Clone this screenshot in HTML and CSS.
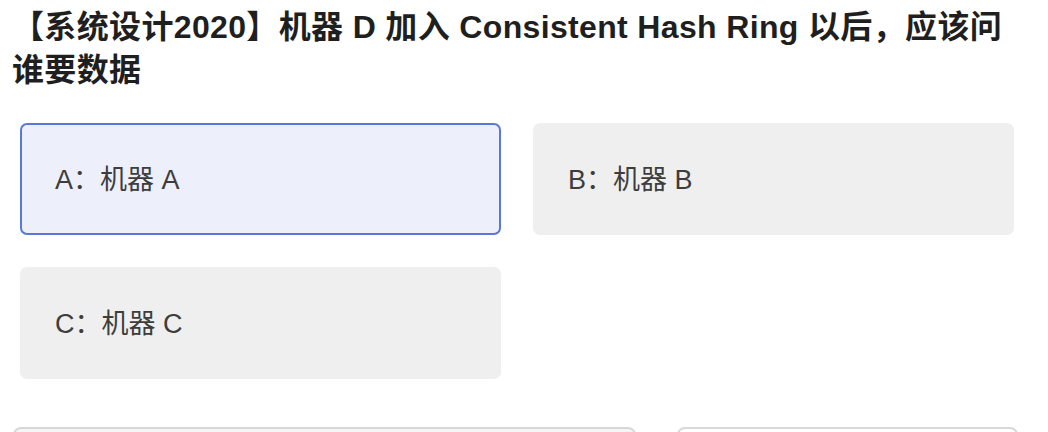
FILE: index.html
```html
<!DOCTYPE html>
<html lang="zh-CN">
<head>
<meta charset="utf-8">
<title>Quiz</title>
<link rel="stylesheet" href="styles.css">
</head>
<body>
<div class="page">
  <h1 class="title">【系统设计2020】机器 D 加入 Consistent Hash Ring 以后，应该问谁要数据</h1>
  <div class="options">
    <div class="option selected">A：机器 A</div>
    <div class="option">B：机器 B</div>
    <div class="option">C：机器 C</div>
  </div>
  <div class="actions">
    <div class="btn btn-left"></div>
    <div class="btn btn-right"></div>
  </div>
</div>
</body>
</html>
```
FILE: styles.css
```css
html, body {
  margin: 0;
  padding: 0;
  background: #ffffff;
}
body {
  font-family: "Liberation Sans", "Noto Sans CJK SC", sans-serif;
  color: #333333;
  overflow: hidden;
}
.page {
  width: 1048px;
  height: 432px;
  overflow: hidden;
}
.title {
  margin: 0;
  padding: 6px 30px 0 12px;
  font-size: 32px;
  line-height: 43px;
  font-weight: 700;
  letter-spacing: 0.35px;
  color: #1f1f1f;
}
.options {
  display: grid;
  grid-template-columns: 481px 481px;
  column-gap: 32px;
  row-gap: 32px;
  padding: 0 0 0 20px;
  margin-top: 31px;
}
.option {
  box-sizing: border-box;
  height: 112px;
  display: flex;
  align-items: center;
  padding: 0 33px 3px 33px;
  background: #efefef;
  border-radius: 7px;
  font-size: 27px;
  color: #3d3d3d;
  border: 2px solid transparent;
}
.option.selected {
  background: #edf0fb;
  border-color: #5a78d6;
}
.actions {
  display: flex;
  gap: 41px;
  padding-left: 13px;
  margin-top: 48px;
}
.btn {
  box-sizing: border-box;
  height: 60px;
  border: 2px solid #d8d8d8;
  border-radius: 8px;
}
.btn-left {
  width: 623px;
  background: #f5f5f5;
}
.btn-right {
  width: 341px;
  background: #ffffff;
}
```
